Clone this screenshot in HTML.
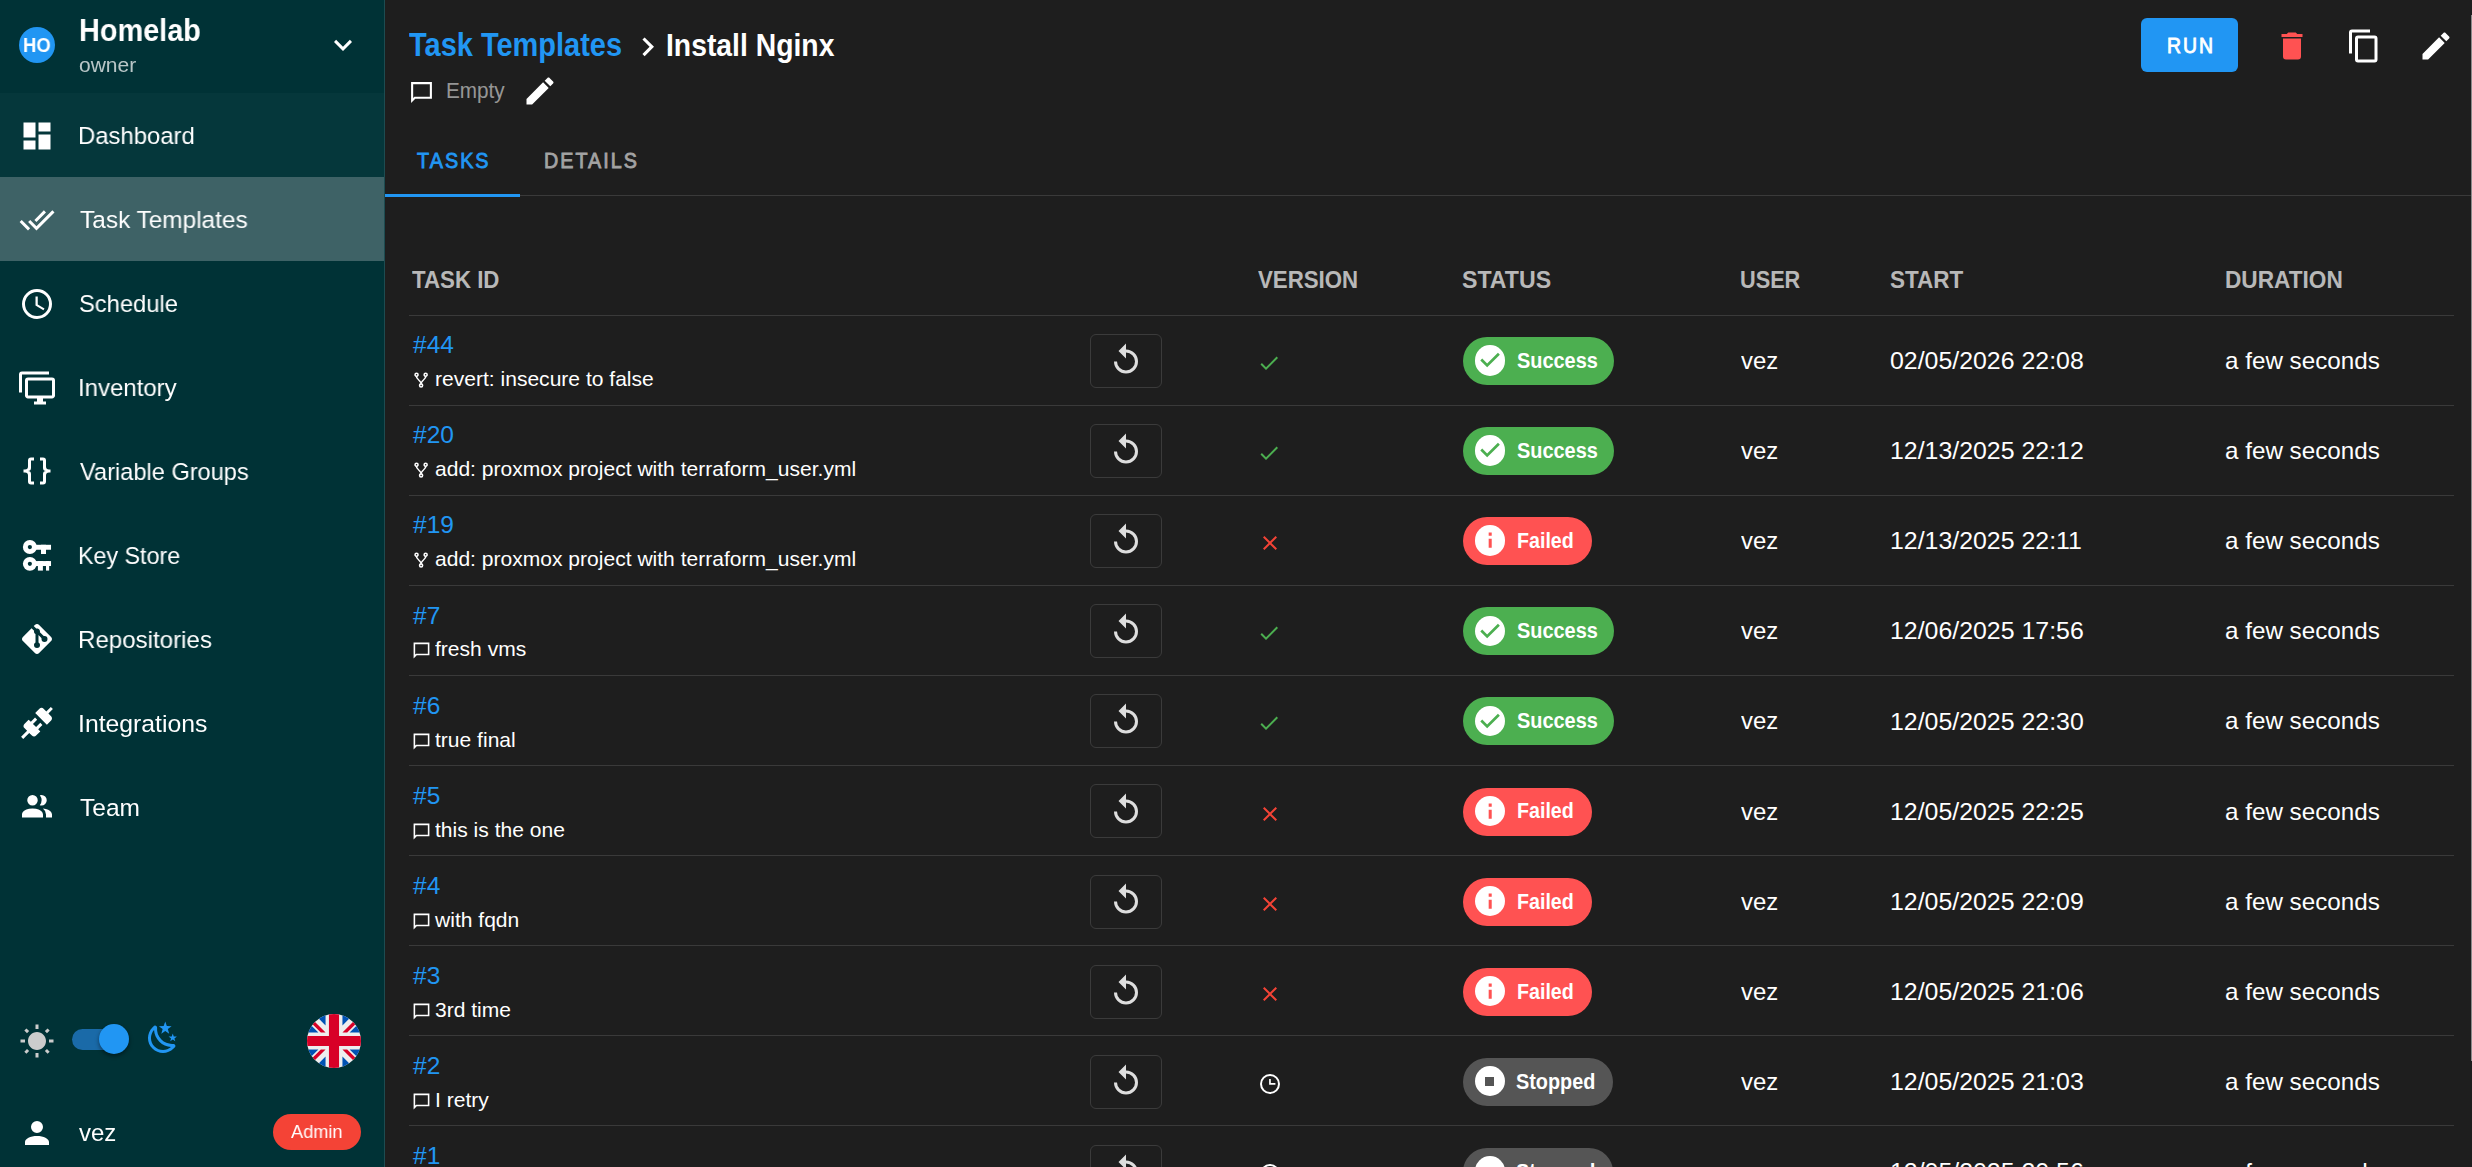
<!DOCTYPE html>
<html><head><meta charset="utf-8"><title>Install Nginx</title>
<style>
html,body{margin:0;padding:0;width:2472px;height:1167px;overflow:hidden;background:#1e1e1e;}
body{position:relative;font-family:"Liberation Sans",sans-serif;}
.t{position:absolute;white-space:nowrap;line-height:1;}
.b{position:absolute;}
.i{position:absolute;display:block;}
</style></head><body>
<div class="b" style="left:0px;top:0px;width:384px;height:1167px;background:#003236;"></div>
<div class="b" style="left:384px;top:0px;width:1px;height:1167px;background:#1d4c51;"></div>
<div class="b" style="left:0px;top:93px;width:384px;height:84px;background:#05373b;"></div>
<div class="b" style="left:0px;top:177px;width:384px;height:84px;background:#3e6266;"></div>
<div class="b" style="left:19px;top:27px;width:36px;height:36px;background:#2196f3;border-radius:50%;"></div>
<div class="t" style="left:23.29px;top:35px;font-size:20.3px;color:#fff;font-weight:bold;transform:scaleX(0.9069);transform-origin:0 0;will-change:transform;">HO</div>
<div class="t" style="left:78.58px;top:15px;font-size:31.8px;color:#fff;font-weight:bold;transform:scaleX(0.9076);transform-origin:0 0;will-change:transform;">Homelab</div>
<div class="t" style="left:79.00px;top:54px;font-size:21px;color:rgba(255,255,255,0.72);transform:scaleX(0.9964);transform-origin:0 0;will-change:transform;">owner</div>
<svg class="i" style="left:325.00px;top:27.30px;width:36px;height:36px;" viewBox="0 0 24 24"><path fill="#fff" fill-rule="evenodd" d="M7.41,8.58L12,13.17L16.59,8.58L18,10L12,16L6,10L7.41,8.58Z"/></svg>
<svg class="i" style="left:19.00px;top:117.90px;width:36px;height:36px;" viewBox="0 0 24 24"><path fill="#fff" fill-rule="evenodd" d="M13,3V9H21V3M13,21H21V11H13M3,21H11V15H3M3,13H11V3H3V13Z"/></svg>
<div class="t" style="left:77.95px;top:124px;font-size:24.5px;color:#fff;transform:scaleX(0.9744);transform-origin:0 0;will-change:transform;">Dashboard</div>
<svg class="i" style="left:19.00px;top:201.79px;width:36px;height:36px;" viewBox="0 0 24 24"><path fill="#fff" fill-rule="evenodd" d="M0.41,13.41L6,19L7.41,17.58L1.83,12M22.24,5.58L11.66,16.17L7.5,12L6.07,13.41L11.66,19L23.66,7M18,7L16.59,5.58L10.24,11.93L11.66,13.34L18,7Z"/></svg>
<div class="t" style="left:79.90px;top:208px;font-size:24.5px;color:#fff;transform:scaleX(0.9958);transform-origin:0 0;will-change:transform;">Task Templates</div>
<svg class="i" style="left:19.00px;top:285.68px;width:36px;height:36px;" viewBox="0 0 24 24"><path fill="#fff" fill-rule="evenodd" d="M12,20A8,8 0 0,0 20,12A8,8 0 0,0 12,4A8,8 0 0,0 4,12A8,8 0 0,0 12,20M12,2A10,10 0 0,1 22,12A10,10 0 0,1 12,22C6.47,22 2,17.5 2,12A10,10 0 0,1 12,2M12.5,7V12.25L17,14.92L16.25,16.15L11,13V7H12.5Z"/></svg>
<div class="t" style="left:78.93px;top:292px;font-size:24.5px;color:#fff;transform:scaleX(0.9690);transform-origin:0 0;will-change:transform;">Schedule</div>
<svg class="i" style="left:19.00px;top:369.57px;width:36px;height:36px;" viewBox="0 0 24 24"><path fill="#fff" fill-rule="evenodd" d="M22,17V7H6V17H22M22,5A2,2 0 0,1 24,7V17C24,18.11 23.1,19 22,19H16V21H18V23H10V21H12V19H6C4.89,19 4,18.11 4,17V7A2,2 0 0,1 6,5H22M2,3V15H0V3A2,2 0 0,1 2,1H20V3H2Z"/></svg>
<div class="t" style="left:77.94px;top:376px;font-size:24.5px;color:#fff;transform:scaleX(0.9788);transform-origin:0 0;will-change:transform;">Inventory</div>
<svg class="i" style="left:19.00px;top:453.46px;width:36px;height:36px;" viewBox="0 0 24 24"><path fill="#fff" fill-rule="evenodd" d="M8,3A2,2 0 0,0 6,5V9A2,2 0 0,1 4,11H3V13H4A2,2 0 0,1 6,15V19A2,2 0 0,0 8,21H10V19H8V14A2,2 0 0,0 6,12A2,2 0 0,0 8,10V5H10V3M16,3A2,2 0 0,1 18,5V9A2,2 0 0,0 20,11H21V13H20A2,2 0 0,0 18,15V19A2,2 0 0,1 16,21H14V19H16V14A2,2 0 0,1 18,12A2,2 0 0,1 16,10V5H14V3H16Z"/></svg>
<div class="t" style="left:79.90px;top:460px;font-size:24.5px;color:#fff;transform:scaleX(0.9629);transform-origin:0 0;will-change:transform;">Variable Groups</div>
<svg class="i" style="left:19px;top:537px;width:36px;height:36px" viewBox="0 0 24 24"><g fill="#fff"><circle cx="7.25" cy="6.7" r="4.65"/><rect x="10.5" y="5.2" width="10.85" height="3.3"/><rect x="14.67" y="5.2" width="3.33" height="6.13"/><circle cx="7.25" cy="17.9" r="4.65"/><rect x="10.5" y="16.05" width="10.85" height="3.3"/><rect x="12.6" y="16.05" width="3.33" height="6.35"/><rect x="18" y="16.05" width="2.1" height="6.35"/></g><circle cx="7.25" cy="6.7" r="1.4" fill="#003236"/><circle cx="7.25" cy="17.9" r="1.4" fill="#003236"/></svg>
<div class="t" style="left:78.00px;top:544px;font-size:24.5px;color:#fff;transform:scaleX(0.9495);transform-origin:0 0;will-change:transform;">Key Store</div>
<svg class="i" style="left:19.00px;top:621.24px;width:36px;height:36px;" viewBox="0 0 24 24"><path fill="#fff" fill-rule="evenodd" d="M2.6,10.59L8.38,4.8L10.07,6.5C9.83,7.35 10.22,8.28 11,8.73V14.27C10.4,14.61 10,15.26 10,16A2,2 0 0,0 12,18A2,2 0 0,0 14,16C14,15.26 13.6,14.61 13,14.27V9.41L15.07,11.5C15,11.65 15,11.82 15,12A2,2 0 0,0 17,14A2,2 0 0,0 19,12A2,2 0 0,0 17,10C16.82,10 16.65,10 16.5,10.07L13.93,7.5C14.19,6.57 13.71,5.55 12.78,5.16C12.35,5 11.9,4.96 11.5,5.07L9.8,3.38L10.59,2.6C11.37,1.81 12.63,1.81 13.41,2.6L21.4,10.59C22.19,11.37 22.19,12.63 21.4,13.41L13.41,21.4C12.63,22.19 11.37,22.19 10.59,21.4L2.6,13.41C1.81,12.63 1.81,11.37 2.6,10.59Z"/></svg>
<div class="t" style="left:77.93px;top:628px;font-size:24.5px;color:#fff;transform:scaleX(0.9836);transform-origin:0 0;will-change:transform;">Repositories</div>
<svg class="i" style="left:19.00px;top:705.13px;width:36px;height:36px;" viewBox="0 0 24 24"><path fill="#fff" fill-rule="evenodd" d="M21.4,7.5C22.2,8.3 22.2,9.6 21.4,10.3L18.6,13.1L10.8,5.3L13.6,2.5C14.4,1.7 15.7,1.7 16.4,2.5L18.2,4.3L21.2,1.3L22.6,2.7L19.6,5.7L21.4,7.5M15.6,13.3L14.2,11.9L11.4,14.7L9.3,12.6L12.1,9.8L10.7,8.4L7.9,11.2L6.4,9.8L3.6,12.6C2.8,13.4 2.8,14.7 3.6,15.4L5.4,17.2L1.4,21.2L2.8,22.6L6.8,18.6L8.6,20.4C9.4,21.2 10.7,21.2 11.4,20.4L14.2,17.6L12.8,16.2L15.6,13.3Z"/></svg>
<div class="t" style="left:77.88px;top:712px;font-size:24.5px;color:#fff;transform:scaleX(1.0104);transform-origin:0 0;will-change:transform;">Integrations</div>
<svg class="i" style="left:19.00px;top:789.02px;width:36px;height:36px;" viewBox="0 0 24 24"><path fill="#fff" fill-rule="evenodd" d="M16,17V19H2V17S2,13 9,13 16,17 16,17M12.5,7.5A3.5,3.5 0 1,0 9,11A3.5,3.5 0 0,0 12.5,7.5M15.94,13A5.32,5.32 0 0,1 18,17V19H22V17S22,13.37 15.94,13M15,4A3.39,3.39 0 0,0 13.87,4.2A5.5,5.5 0 0,1 13.87,10.8A3.39,3.39 0 0,0 15,11A3.5,3.5 0 0,0 18.5,7.5A3.5,3.5 0 0,0 15,4Z"/></svg>
<div class="t" style="left:79.90px;top:796px;font-size:24.5px;color:#fff;transform:scaleX(0.9932);transform-origin:0 0;will-change:transform;">Team</div>
<svg class="i" style="left:19.00px;top:1022.80px;width:36px;height:36px;" viewBox="0 0 24 24"><path fill="#cccccc" fill-rule="evenodd" d="M3.55,19.09L4.96,20.5L6.76,18.71L5.34,17.29M12,6C8.69,6 6,8.69 6,12S8.69,18 12,18 18,15.31 18,12C18,8.68 15.31,6 12,6M20,13H23V11H20M17.24,18.71L19.04,20.5L20.45,19.09L18.66,17.29M20.45,5L19.04,3.6L17.24,5.39L18.66,6.81M13,1H11V4H13M6.76,5.39L4.96,3.6L3.55,5L5.34,6.81L6.76,5.39M1,13H4V11H1M13,20H11V23H13"/></svg>
<div class="b" style="left:72px;top:1029px;width:52px;height:21px;background:#1a6aa8;border-radius:11px;"></div>
<div class="b" style="left:99px;top:1024px;width:30px;height:30px;background:#2196f3;border-radius:50%;box-shadow:0 2px 4px rgba(0,0,0,0.45);"></div>
<svg class="i" style="left:144.50px;top:1020.40px;width:36px;height:36px;" viewBox="0 0 24 24"><path fill="#2196f3" fill-rule="evenodd" d="M17.75,4.09L15.22,6.03L16.13,9.09L13.5,7.28L10.87,9.09L11.78,6.03L9.25,4.09L12.44,4L13.5,1L14.56,4L17.75,4.09M21.25,11L19.61,12.25L20.2,14.23L18.5,13.06L16.8,14.23L17.39,12.25L15.75,11L17.81,10.95L18.5,9L19.19,10.95L21.25,11M18.97,15.95C19.8,15.87 20.69,17.05 20.16,17.8C19.84,18.25 19.5,18.67 19.08,19.07C15.17,23 8.84,23 4.94,19.07C1.03,15.17 1.03,8.83 4.94,4.93C5.34,4.53 5.76,4.17 6.21,3.85C6.96,3.32 8.14,4.21 8.06,5.04C7.79,7.9 8.75,10.87 10.95,13.06C13.14,15.26 16.1,16.22 18.97,15.95M17.33,17.97C14.5,17.81 11.7,16.64 9.53,14.5C7.36,12.31 6.2,9.5 6.04,6.68C3.23,9.82 3.34,14.64 6.35,17.66C9.37,20.67 14.19,20.78 17.33,17.97Z"/></svg>
<svg class="i" style="left:307px;top:1014px;width:54px;height:54px" viewBox="0 0 512 512">
<defs><clipPath id="fc"><circle cx="256" cy="256" r="256"/></clipPath></defs>
<g clip-path="url(#fc)">
<rect x="0" y="0" width="512" height="512" fill="#eee"/>
<path fill="#0052b4" d="M336 0v108L444 0ZM512 68L404 176h108ZM0 176h108L0 68ZM68 0l108 108V0ZM176 512V404L68 512ZM0 444l108-108H0ZM512 336H404l108 108ZM444 512L336 404v108Z"/>
<path fill="#d80027" d="M0 0v45l131 131h45L0 0ZM208 0v208H0v96h208v208h96V304h208v-96H304V0h-96ZM336 176L512 0v45L381 176ZM176 336L0 512v-45L131 336ZM336 336l176 176v-45L381 336h-45Z"/>
</g></svg>
<svg class="i" style="left:19.00px;top:1114.80px;width:36px;height:36px;" viewBox="0 0 24 24"><path fill="#fff" fill-rule="evenodd" d="M12,4A4,4 0 0,1 16,8A4,4 0 0,1 12,12A4,4 0 0,1 8,8A4,4 0 0,1 12,4M12,14C16.42,14 20,15.79 20,18V20H4V18C4,15.79 7.58,14 12,14Z"/></svg>
<div class="t" style="left:79.30px;top:1121px;font-size:24px;color:#fff;transform:scaleX(0.9889);transform-origin:0 0;will-change:transform;">vez</div>
<div class="b" style="left:273px;top:1114px;width:88px;height:36px;background:#f44336;border-radius:18px;"></div>
<div class="t" style="left:291.30px;top:1123px;font-size:18.6px;color:#fff;transform:scaleX(0.9788);transform-origin:0 0;will-change:transform;">Admin</div>
<div class="b" style="left:385px;top:0px;width:2087px;height:1167px;background:#1e1e1e;"></div>
<div class="t" style="left:409.40px;top:29px;font-size:32.5px;color:#2196f3;font-weight:bold;transform:scaleX(0.8912);transform-origin:0 0;">Task Templates</div>
<svg class="i" style="left:629.05px;top:28.45px;width:37.5px;height:37.5px;" viewBox="0 0 24 24"><path fill="#fff" fill-rule="evenodd" d="M8.59,16.58L13.17,12L8.59,7.41L10,6L16,12L10,18L8.59,16.58Z"/></svg>
<div class="t" style="left:666.23px;top:29px;font-size:32px;color:#fff;font-weight:bold;transform:scaleX(0.8851);transform-origin:0 0;">Install Nginx</div>
<svg class="i" style="left:408.50px;top:79.90px;width:25px;height:25px;" viewBox="0 0 24 24"><path fill="#fff" fill-rule="evenodd" d="M2,2H22V18H6L2,22ZM4,4V17.17L5.17,16H20V4Z"/></svg>
<div class="t" style="left:446.27px;top:81px;font-size:21.5px;color:rgba(255,255,255,0.55);transform:scaleX(0.9627);transform-origin:0 0;">Empty</div>
<svg class="i" style="left:521.50px;top:72.50px;width:36px;height:36px;" viewBox="0 0 24 24"><path fill="#fff" fill-rule="evenodd" d="M20.71,7.04C21.1,6.65 21.1,6 20.71,5.63L18.37,3.29C18,2.9 17.35,2.9 16.96,3.29L15.12,5.12L18.87,8.87M3,17.25V21H6.75L17.81,9.93L14.06,6.18L3,17.25Z"/></svg>
<div class="b" style="left:2141px;top:18px;width:97px;height:54px;background:#2196f3;border-radius:6px;"></div>
<div class="t" style="left:2166.78px;top:35px;font-size:21.2px;color:#fff;letter-spacing:2.2px;transform:scaleX(0.9167);transform-origin:0 0;-webkit-text-stroke:0.85px currentColor;">RUN</div>
<svg class="i" style="left:2274.00px;top:27.50px;width:36px;height:36px;" viewBox="0 0 24 24"><path fill="#ff5252" fill-rule="evenodd" d="M19,4H15.5L14.5,3H9.5L8.5,4H5V6H19M6,19A2,2 0 0,0 8,21H16A2,2 0 0,0 18,19V7H6V19Z"/></svg>
<svg class="i" style="left:2345.50px;top:27.50px;width:36px;height:36px;" viewBox="0 0 24 24"><path fill="#fff" fill-rule="evenodd" d="M19,21H8V7H19M19,5H8A2,2 0 0,0 6,7V21A2,2 0 0,0 8,23H19A2,2 0 0,0 21,21V7A2,2 0 0,0 19,5M16,1H4A2,2 0 0,0 2,3V17H4V3H16V1Z"/></svg>
<svg class="i" style="left:2417.50px;top:27.50px;width:36px;height:36px;" viewBox="0 0 24 24"><path fill="#fff" fill-rule="evenodd" d="M20.71,7.04C21.1,6.65 21.1,6 20.71,5.63L18.37,3.29C18,2.9 17.35,2.9 16.96,3.29L15.12,5.12L18.87,8.87M3,17.25V21H6.75L17.81,9.93L14.06,6.18L3,17.25Z"/></svg>
<div class="t" style="left:416.80px;top:150px;font-size:21.2px;color:#2196f3;letter-spacing:2.2px;transform:scaleX(0.9329);transform-origin:0 0;-webkit-text-stroke:0.85px currentColor;">TASKS</div>
<div class="t" style="left:543.57px;top:150px;font-size:21.2px;color:#a3a3a3;letter-spacing:2.2px;transform:scaleX(0.9303);transform-origin:0 0;-webkit-text-stroke:0.85px currentColor;">DETAILS</div>
<div class="b" style="left:385px;top:195px;width:2087px;height:1px;background:#3a3a3a;"></div>
<div class="b" style="left:385px;top:194px;width:135px;height:3px;background:#2196f3;"></div>
<div class="b" style="left:2471px;top:15px;width:1px;height:1046px;background:#8a8a8a;"></div>
<div class="t" style="left:412.40px;top:268px;font-size:24.8px;color:rgba(255,255,255,0.7);font-weight:bold;transform:scaleX(0.8979);transform-origin:0 0;">TASK ID</div>
<div class="t" style="left:1257.50px;top:268px;font-size:24.8px;color:rgba(255,255,255,0.7);font-weight:bold;transform:scaleX(0.8973);transform-origin:0 0;">VERSION</div>
<div class="t" style="left:1462.37px;top:268px;font-size:24.8px;color:rgba(255,255,255,0.7);font-weight:bold;transform:scaleX(0.9330);transform-origin:0 0;">STATUS</div>
<div class="t" style="left:1739.83px;top:268px;font-size:24.8px;color:rgba(255,255,255,0.7);font-weight:bold;transform:scaleX(0.8746);transform-origin:0 0;">USER</div>
<div class="t" style="left:1889.79px;top:268px;font-size:24.8px;color:rgba(255,255,255,0.7);font-weight:bold;transform:scaleX(0.9062);transform-origin:0 0;">START</div>
<div class="t" style="left:2225.49px;top:268px;font-size:24.8px;color:rgba(255,255,255,0.7);font-weight:bold;transform:scaleX(0.9126);transform-origin:0 0;">DURATION</div>
<div class="b" style="left:409px;top:315px;width:2045px;height:1px;background:#3a3a3a;"></div>
<div class="t" style="left:413.00px;top:333px;font-size:24.5px;color:#2196f3;">#44</div>
<svg class="i" style="left:411.90px;top:371.10px;width:18.2px;height:18.2px;" viewBox="0 0 24 24"><path fill="#fff" fill-rule="evenodd" d="M6,2A3,3 0 0,1 9,5C9,6.28 8.19,7.38 7.06,7.81C7.15,8.27 7.39,8.83 8,9.63C9,10.92 11,12.83 12,14.17C13,12.83 15,10.92 16,9.63C16.61,8.83 16.85,8.27 16.94,7.81C15.81,7.38 15,6.28 15,5A3,3 0 0,1 18,2A3,3 0 0,1 21,5C21,6.32 20.14,7.45 18.95,7.85C18.87,8.37 18.64,9 18,9.83C17,11.17 15,13.08 14,14.38C13.39,15.17 13.15,15.73 13.06,16.19C14.19,16.62 15,17.72 15,19A3,3 0 0,1 12,22A3,3 0 0,1 9,19C9,17.72 9.81,16.62 10.94,16.19C10.85,15.73 10.61,15.17 10,14.38C9,13.08 7,11.17 6,9.83C5.36,9 5.13,8.37 5.05,7.85C3.86,7.45 3,6.32 3,5A3,3 0 0,1 6,2M6,4A1,1 0 0,0 5,5A1,1 0 0,0 6,6A1,1 0 0,0 7,5A1,1 0 0,0 6,4M18,4A1,1 0 0,0 17,5A1,1 0 0,0 18,6A1,1 0 0,0 19,5A1,1 0 0,0 18,4M12,18A1,1 0 0,0 11,19A1,1 0 0,0 12,20A1,1 0 0,0 13,19A1,1 0 0,0 12,18Z"/></svg>
<div class="t" style="left:434.70px;top:368px;font-size:21px;color:#fff;transform:scaleX(1.0023);transform-origin:0 0;">revert: insecure to false</div>
<div class="b" style="left:1090px;top:334px;width:72px;height:54px;box-sizing:border-box;border:1px solid #3b3b3b;border-radius:6px;"></div>
<svg class="i" style="left:1108.00px;top:341.80px;width:36px;height:36px;" viewBox="0 0 24 24"><path fill="#dedede" fill-rule="evenodd" d="M12,5V1L7,6L12,11V7A6,6 0 0,1 18,13A6,6 0 0,1 12,19A6,6 0 0,1 6,13H4A8,8 0 0,0 12,21A8,8 0 0,0 20,13A8,8 0 0,0 12,5Z"/></svg>
<svg class="i" style="left:1256.80px;top:350.90px;width:24px;height:24px;" viewBox="0 0 24 24"><path fill="#4caf50" fill-rule="evenodd" d="M21,7L9,19L3.5,13.5L4.91,12.09L9,16.17L19.59,5.59L21,7Z"/></svg>
<div class="b" style="left:1463px;top:337px;width:151px;height:48px;background:#4caf50;border-radius:24px;"></div>
<div class="b" style="left:1474.7px;top:345.2px;width:30.4px;height:30.4px;background:#fff;border-radius:50%;"></div>
<svg class="i" style="left:1474.7px;top:345.20px;width:30.4px;height:30.4px" viewBox="0 0 20 20"><path fill="#4caf50" d="M8,14.7L3.5,10.2L4.75,8.95L8,12.2L15.1,5.1L16.35,6.35L8,14.7Z"/></svg>
<div class="t" style="left:1516.58px;top:350px;font-size:21.7px;color:#fff;font-weight:bold;transform:scaleX(0.9186);transform-origin:0 0;">Success</div>
<div class="t" style="left:1740.70px;top:349px;font-size:24px;color:#fff;transform:scaleX(0.9972);transform-origin:0 0;">vez</div>
<div class="t" style="left:1889.68px;top:349px;font-size:24.4px;color:#fff;transform:scaleX(1.0202);transform-origin:0 0;">02/05/2026 22:08</div>
<div class="t" style="left:2225.39px;top:349px;font-size:24px;color:#fff;transform:scaleX(1.0092);transform-origin:0 0;">a few seconds</div>
<div class="b" style="left:409px;top:405px;width:2045px;height:1px;background:#3a3a3a;"></div>
<div class="t" style="left:413.00px;top:423px;font-size:24.5px;color:#2196f3;">#20</div>
<svg class="i" style="left:411.90px;top:461.20px;width:18.2px;height:18.2px;" viewBox="0 0 24 24"><path fill="#fff" fill-rule="evenodd" d="M6,2A3,3 0 0,1 9,5C9,6.28 8.19,7.38 7.06,7.81C7.15,8.27 7.39,8.83 8,9.63C9,10.92 11,12.83 12,14.17C13,12.83 15,10.92 16,9.63C16.61,8.83 16.85,8.27 16.94,7.81C15.81,7.38 15,6.28 15,5A3,3 0 0,1 18,2A3,3 0 0,1 21,5C21,6.32 20.14,7.45 18.95,7.85C18.87,8.37 18.64,9 18,9.83C17,11.17 15,13.08 14,14.38C13.39,15.17 13.15,15.73 13.06,16.19C14.19,16.62 15,17.72 15,19A3,3 0 0,1 12,22A3,3 0 0,1 9,19C9,17.72 9.81,16.62 10.94,16.19C10.85,15.73 10.61,15.17 10,14.38C9,13.08 7,11.17 6,9.83C5.36,9 5.13,8.37 5.05,7.85C3.86,7.45 3,6.32 3,5A3,3 0 0,1 6,2M6,4A1,1 0 0,0 5,5A1,1 0 0,0 6,6A1,1 0 0,0 7,5A1,1 0 0,0 6,4M18,4A1,1 0 0,0 17,5A1,1 0 0,0 18,6A1,1 0 0,0 19,5A1,1 0 0,0 18,4M12,18A1,1 0 0,0 11,19A1,1 0 0,0 12,20A1,1 0 0,0 13,19A1,1 0 0,0 12,18Z"/></svg>
<div class="t" style="left:434.70px;top:458px;font-size:21px;color:#fff;transform:scaleX(1.0023);transform-origin:0 0;">add: proxmox project with terraform_user.yml</div>
<div class="b" style="left:1090px;top:424px;width:72px;height:54px;box-sizing:border-box;border:1px solid #3b3b3b;border-radius:6px;"></div>
<svg class="i" style="left:1108.00px;top:431.90px;width:36px;height:36px;" viewBox="0 0 24 24"><path fill="#dedede" fill-rule="evenodd" d="M12,5V1L7,6L12,11V7A6,6 0 0,1 18,13A6,6 0 0,1 12,19A6,6 0 0,1 6,13H4A8,8 0 0,0 12,21A8,8 0 0,0 20,13A8,8 0 0,0 12,5Z"/></svg>
<svg class="i" style="left:1256.80px;top:441.00px;width:24px;height:24px;" viewBox="0 0 24 24"><path fill="#4caf50" fill-rule="evenodd" d="M21,7L9,19L3.5,13.5L4.91,12.09L9,16.17L19.59,5.59L21,7Z"/></svg>
<div class="b" style="left:1463px;top:427px;width:151px;height:48px;background:#4caf50;border-radius:24px;"></div>
<div class="b" style="left:1474.7px;top:435.3px;width:30.4px;height:30.4px;background:#fff;border-radius:50%;"></div>
<svg class="i" style="left:1474.7px;top:435.30px;width:30.4px;height:30.4px" viewBox="0 0 20 20"><path fill="#4caf50" d="M8,14.7L3.5,10.2L4.75,8.95L8,12.2L15.1,5.1L16.35,6.35L8,14.7Z"/></svg>
<div class="t" style="left:1516.58px;top:440px;font-size:21.7px;color:#fff;font-weight:bold;transform:scaleX(0.9186);transform-origin:0 0;">Success</div>
<div class="t" style="left:1740.70px;top:439px;font-size:24px;color:#fff;transform:scaleX(0.9972);transform-origin:0 0;">vez</div>
<div class="t" style="left:1889.68px;top:439px;font-size:24.4px;color:#fff;transform:scaleX(1.0202);transform-origin:0 0;">12/13/2025 22:12</div>
<div class="t" style="left:2225.39px;top:439px;font-size:24px;color:#fff;transform:scaleX(1.0092);transform-origin:0 0;">a few seconds</div>
<div class="b" style="left:409px;top:495px;width:2045px;height:1px;background:#3a3a3a;"></div>
<div class="t" style="left:413.00px;top:513px;font-size:24.5px;color:#2196f3;">#19</div>
<svg class="i" style="left:411.90px;top:551.30px;width:18.2px;height:18.2px;" viewBox="0 0 24 24"><path fill="#fff" fill-rule="evenodd" d="M6,2A3,3 0 0,1 9,5C9,6.28 8.19,7.38 7.06,7.81C7.15,8.27 7.39,8.83 8,9.63C9,10.92 11,12.83 12,14.17C13,12.83 15,10.92 16,9.63C16.61,8.83 16.85,8.27 16.94,7.81C15.81,7.38 15,6.28 15,5A3,3 0 0,1 18,2A3,3 0 0,1 21,5C21,6.32 20.14,7.45 18.95,7.85C18.87,8.37 18.64,9 18,9.83C17,11.17 15,13.08 14,14.38C13.39,15.17 13.15,15.73 13.06,16.19C14.19,16.62 15,17.72 15,19A3,3 0 0,1 12,22A3,3 0 0,1 9,19C9,17.72 9.81,16.62 10.94,16.19C10.85,15.73 10.61,15.17 10,14.38C9,13.08 7,11.17 6,9.83C5.36,9 5.13,8.37 5.05,7.85C3.86,7.45 3,6.32 3,5A3,3 0 0,1 6,2M6,4A1,1 0 0,0 5,5A1,1 0 0,0 6,6A1,1 0 0,0 7,5A1,1 0 0,0 6,4M18,4A1,1 0 0,0 17,5A1,1 0 0,0 18,6A1,1 0 0,0 19,5A1,1 0 0,0 18,4M12,18A1,1 0 0,0 11,19A1,1 0 0,0 12,20A1,1 0 0,0 13,19A1,1 0 0,0 12,18Z"/></svg>
<div class="t" style="left:434.70px;top:548px;font-size:21px;color:#fff;transform:scaleX(1.0023);transform-origin:0 0;">add: proxmox project with terraform_user.yml</div>
<div class="b" style="left:1090px;top:514px;width:72px;height:54px;box-sizing:border-box;border:1px solid #3b3b3b;border-radius:6px;"></div>
<svg class="i" style="left:1108.00px;top:522.00px;width:36px;height:36px;" viewBox="0 0 24 24"><path fill="#dedede" fill-rule="evenodd" d="M12,5V1L7,6L12,11V7A6,6 0 0,1 18,13A6,6 0 0,1 12,19A6,6 0 0,1 6,13H4A8,8 0 0,0 12,21A8,8 0 0,0 20,13A8,8 0 0,0 12,5Z"/></svg>
<svg class="i" style="left:1257.50px;top:531.20px;width:24px;height:24px;" viewBox="0 0 24 24"><path fill="#f44336" fill-rule="evenodd" d="M19,6.41L17.59,5L12,10.59L6.41,5L5,6.41L10.59,12L5,17.59L6.41,19L12,13.41L17.59,19L19,17.59L13.41,12L19,6.41Z"/></svg>
<div class="b" style="left:1463px;top:517px;width:129px;height:48px;background:#ff5252;border-radius:24px;"></div>
<div class="b" style="left:1474.7px;top:525.4000000000001px;width:30.4px;height:30.4px;background:#fff;border-radius:50%;"></div>
<svg class="i" style="left:1474.7px;top:525.40px;width:30.4px;height:30.4px" viewBox="0 0 20 20"><path fill="#ff5252" d="M11,7H9V5H11M11,15H9V9H11Z"/></svg>
<div class="t" style="left:1516.79px;top:530px;font-size:21.7px;color:#fff;font-weight:bold;transform:scaleX(0.9066);transform-origin:0 0;">Failed</div>
<div class="t" style="left:1740.70px;top:529px;font-size:24px;color:#fff;transform:scaleX(0.9972);transform-origin:0 0;">vez</div>
<div class="t" style="left:1889.68px;top:529px;font-size:24.4px;color:#fff;transform:scaleX(1.0202);transform-origin:0 0;">12/13/2025 22:11</div>
<div class="t" style="left:2225.39px;top:529px;font-size:24px;color:#fff;transform:scaleX(1.0092);transform-origin:0 0;">a few seconds</div>
<div class="b" style="left:409px;top:585px;width:2045px;height:1px;background:#3a3a3a;"></div>
<div class="t" style="left:413.00px;top:604px;font-size:24.5px;color:#2196f3;">#7</div>
<svg class="i" style="left:411.60px;top:641.40px;width:19px;height:19px;" viewBox="0 0 24 24"><path fill="#fff" fill-rule="evenodd" d="M2,2H22V18H6L2,22ZM4,4V17.17L5.17,16H20V4Z"/></svg>
<div class="t" style="left:434.70px;top:638px;font-size:21px;color:#fff;transform:scaleX(1.0023);transform-origin:0 0;">fresh vms</div>
<div class="b" style="left:1090px;top:604px;width:72px;height:54px;box-sizing:border-box;border:1px solid #3b3b3b;border-radius:6px;"></div>
<svg class="i" style="left:1108.00px;top:612.10px;width:36px;height:36px;" viewBox="0 0 24 24"><path fill="#dedede" fill-rule="evenodd" d="M12,5V1L7,6L12,11V7A6,6 0 0,1 18,13A6,6 0 0,1 12,19A6,6 0 0,1 6,13H4A8,8 0 0,0 12,21A8,8 0 0,0 20,13A8,8 0 0,0 12,5Z"/></svg>
<svg class="i" style="left:1256.80px;top:621.20px;width:24px;height:24px;" viewBox="0 0 24 24"><path fill="#4caf50" fill-rule="evenodd" d="M21,7L9,19L3.5,13.5L4.91,12.09L9,16.17L19.59,5.59L21,7Z"/></svg>
<div class="b" style="left:1463px;top:607px;width:151px;height:48px;background:#4caf50;border-radius:24px;"></div>
<div class="b" style="left:1474.7px;top:615.5px;width:30.4px;height:30.4px;background:#fff;border-radius:50%;"></div>
<svg class="i" style="left:1474.7px;top:615.50px;width:30.4px;height:30.4px" viewBox="0 0 20 20"><path fill="#4caf50" d="M8,14.7L3.5,10.2L4.75,8.95L8,12.2L15.1,5.1L16.35,6.35L8,14.7Z"/></svg>
<div class="t" style="left:1516.58px;top:620px;font-size:21.7px;color:#fff;font-weight:bold;transform:scaleX(0.9186);transform-origin:0 0;">Success</div>
<div class="t" style="left:1740.70px;top:619px;font-size:24px;color:#fff;transform:scaleX(0.9972);transform-origin:0 0;">vez</div>
<div class="t" style="left:1889.68px;top:619px;font-size:24.4px;color:#fff;transform:scaleX(1.0202);transform-origin:0 0;">12/06/2025 17:56</div>
<div class="t" style="left:2225.39px;top:619px;font-size:24px;color:#fff;transform:scaleX(1.0092);transform-origin:0 0;">a few seconds</div>
<div class="b" style="left:409px;top:675px;width:2045px;height:1px;background:#3a3a3a;"></div>
<div class="t" style="left:413.00px;top:694px;font-size:24.5px;color:#2196f3;">#6</div>
<svg class="i" style="left:411.60px;top:731.50px;width:19px;height:19px;" viewBox="0 0 24 24"><path fill="#fff" fill-rule="evenodd" d="M2,2H22V18H6L2,22ZM4,4V17.17L5.17,16H20V4Z"/></svg>
<div class="t" style="left:434.70px;top:729px;font-size:21px;color:#fff;transform:scaleX(1.0023);transform-origin:0 0;">true final</div>
<div class="b" style="left:1090px;top:694px;width:72px;height:54px;box-sizing:border-box;border:1px solid #3b3b3b;border-radius:6px;"></div>
<svg class="i" style="left:1108.00px;top:702.20px;width:36px;height:36px;" viewBox="0 0 24 24"><path fill="#dedede" fill-rule="evenodd" d="M12,5V1L7,6L12,11V7A6,6 0 0,1 18,13A6,6 0 0,1 12,19A6,6 0 0,1 6,13H4A8,8 0 0,0 12,21A8,8 0 0,0 20,13A8,8 0 0,0 12,5Z"/></svg>
<svg class="i" style="left:1256.80px;top:711.30px;width:24px;height:24px;" viewBox="0 0 24 24"><path fill="#4caf50" fill-rule="evenodd" d="M21,7L9,19L3.5,13.5L4.91,12.09L9,16.17L19.59,5.59L21,7Z"/></svg>
<div class="b" style="left:1463px;top:697px;width:151px;height:48px;background:#4caf50;border-radius:24px;"></div>
<div class="b" style="left:1474.7px;top:705.6px;width:30.4px;height:30.4px;background:#fff;border-radius:50%;"></div>
<svg class="i" style="left:1474.7px;top:705.60px;width:30.4px;height:30.4px" viewBox="0 0 20 20"><path fill="#4caf50" d="M8,14.7L3.5,10.2L4.75,8.95L8,12.2L15.1,5.1L16.35,6.35L8,14.7Z"/></svg>
<div class="t" style="left:1516.58px;top:710px;font-size:21.7px;color:#fff;font-weight:bold;transform:scaleX(0.9186);transform-origin:0 0;">Success</div>
<div class="t" style="left:1740.70px;top:709px;font-size:24px;color:#fff;transform:scaleX(0.9972);transform-origin:0 0;">vez</div>
<div class="t" style="left:1889.68px;top:710px;font-size:24.4px;color:#fff;transform:scaleX(1.0202);transform-origin:0 0;">12/05/2025 22:30</div>
<div class="t" style="left:2225.39px;top:709px;font-size:24px;color:#fff;transform:scaleX(1.0092);transform-origin:0 0;">a few seconds</div>
<div class="b" style="left:409px;top:765px;width:2045px;height:1px;background:#3a3a3a;"></div>
<div class="t" style="left:413.00px;top:784px;font-size:24.5px;color:#2196f3;">#5</div>
<svg class="i" style="left:411.60px;top:821.60px;width:19px;height:19px;" viewBox="0 0 24 24"><path fill="#fff" fill-rule="evenodd" d="M2,2H22V18H6L2,22ZM4,4V17.17L5.17,16H20V4Z"/></svg>
<div class="t" style="left:434.70px;top:819px;font-size:21px;color:#fff;transform:scaleX(1.0023);transform-origin:0 0;">this is the one</div>
<div class="b" style="left:1090px;top:784px;width:72px;height:54px;box-sizing:border-box;border:1px solid #3b3b3b;border-radius:6px;"></div>
<svg class="i" style="left:1108.00px;top:792.30px;width:36px;height:36px;" viewBox="0 0 24 24"><path fill="#dedede" fill-rule="evenodd" d="M12,5V1L7,6L12,11V7A6,6 0 0,1 18,13A6,6 0 0,1 12,19A6,6 0 0,1 6,13H4A8,8 0 0,0 12,21A8,8 0 0,0 20,13A8,8 0 0,0 12,5Z"/></svg>
<svg class="i" style="left:1257.50px;top:801.50px;width:24px;height:24px;" viewBox="0 0 24 24"><path fill="#f44336" fill-rule="evenodd" d="M19,6.41L17.59,5L12,10.59L6.41,5L5,6.41L10.59,12L5,17.59L6.41,19L12,13.41L17.59,19L19,17.59L13.41,12L19,6.41Z"/></svg>
<div class="b" style="left:1463px;top:788px;width:129px;height:48px;background:#ff5252;border-radius:24px;"></div>
<div class="b" style="left:1474.7px;top:795.7px;width:30.4px;height:30.4px;background:#fff;border-radius:50%;"></div>
<svg class="i" style="left:1474.7px;top:795.70px;width:30.4px;height:30.4px" viewBox="0 0 20 20"><path fill="#ff5252" d="M11,7H9V5H11M11,15H9V9H11Z"/></svg>
<div class="t" style="left:1516.79px;top:800px;font-size:21.7px;color:#fff;font-weight:bold;transform:scaleX(0.9066);transform-origin:0 0;">Failed</div>
<div class="t" style="left:1740.70px;top:800px;font-size:24px;color:#fff;transform:scaleX(0.9972);transform-origin:0 0;">vez</div>
<div class="t" style="left:1889.68px;top:800px;font-size:24.4px;color:#fff;transform:scaleX(1.0202);transform-origin:0 0;">12/05/2025 22:25</div>
<div class="t" style="left:2225.39px;top:800px;font-size:24px;color:#fff;transform:scaleX(1.0092);transform-origin:0 0;">a few seconds</div>
<div class="b" style="left:409px;top:855px;width:2045px;height:1px;background:#3a3a3a;"></div>
<div class="t" style="left:413.00px;top:874px;font-size:24.5px;color:#2196f3;">#4</div>
<svg class="i" style="left:411.60px;top:911.70px;width:19px;height:19px;" viewBox="0 0 24 24"><path fill="#fff" fill-rule="evenodd" d="M2,2H22V18H6L2,22ZM4,4V17.17L5.17,16H20V4Z"/></svg>
<div class="t" style="left:434.70px;top:909px;font-size:21px;color:#fff;transform:scaleX(1.0023);transform-origin:0 0;">with fqdn</div>
<div class="b" style="left:1090px;top:875px;width:72px;height:54px;box-sizing:border-box;border:1px solid #3b3b3b;border-radius:6px;"></div>
<svg class="i" style="left:1108.00px;top:882.40px;width:36px;height:36px;" viewBox="0 0 24 24"><path fill="#dedede" fill-rule="evenodd" d="M12,5V1L7,6L12,11V7A6,6 0 0,1 18,13A6,6 0 0,1 12,19A6,6 0 0,1 6,13H4A8,8 0 0,0 12,21A8,8 0 0,0 20,13A8,8 0 0,0 12,5Z"/></svg>
<svg class="i" style="left:1257.50px;top:891.60px;width:24px;height:24px;" viewBox="0 0 24 24"><path fill="#f44336" fill-rule="evenodd" d="M19,6.41L17.59,5L12,10.59L6.41,5L5,6.41L10.59,12L5,17.59L6.41,19L12,13.41L17.59,19L19,17.59L13.41,12L19,6.41Z"/></svg>
<div class="b" style="left:1463px;top:878px;width:129px;height:48px;background:#ff5252;border-radius:24px;"></div>
<div class="b" style="left:1474.7px;top:885.8px;width:30.4px;height:30.4px;background:#fff;border-radius:50%;"></div>
<svg class="i" style="left:1474.7px;top:885.80px;width:30.4px;height:30.4px" viewBox="0 0 20 20"><path fill="#ff5252" d="M11,7H9V5H11M11,15H9V9H11Z"/></svg>
<div class="t" style="left:1516.79px;top:891px;font-size:21.7px;color:#fff;font-weight:bold;transform:scaleX(0.9066);transform-origin:0 0;">Failed</div>
<div class="t" style="left:1740.70px;top:890px;font-size:24px;color:#fff;transform:scaleX(0.9972);transform-origin:0 0;">vez</div>
<div class="t" style="left:1889.68px;top:890px;font-size:24.4px;color:#fff;transform:scaleX(1.0202);transform-origin:0 0;">12/05/2025 22:09</div>
<div class="t" style="left:2225.39px;top:890px;font-size:24px;color:#fff;transform:scaleX(1.0092);transform-origin:0 0;">a few seconds</div>
<div class="b" style="left:409px;top:945px;width:2045px;height:1px;background:#3a3a3a;"></div>
<div class="t" style="left:413.00px;top:964px;font-size:24.5px;color:#2196f3;">#3</div>
<svg class="i" style="left:411.60px;top:1001.80px;width:19px;height:19px;" viewBox="0 0 24 24"><path fill="#fff" fill-rule="evenodd" d="M2,2H22V18H6L2,22ZM4,4V17.17L5.17,16H20V4Z"/></svg>
<div class="t" style="left:434.70px;top:999px;font-size:21px;color:#fff;transform:scaleX(1.0023);transform-origin:0 0;">3rd time</div>
<div class="b" style="left:1090px;top:965px;width:72px;height:54px;box-sizing:border-box;border:1px solid #3b3b3b;border-radius:6px;"></div>
<svg class="i" style="left:1108.00px;top:972.50px;width:36px;height:36px;" viewBox="0 0 24 24"><path fill="#dedede" fill-rule="evenodd" d="M12,5V1L7,6L12,11V7A6,6 0 0,1 18,13A6,6 0 0,1 12,19A6,6 0 0,1 6,13H4A8,8 0 0,0 12,21A8,8 0 0,0 20,13A8,8 0 0,0 12,5Z"/></svg>
<svg class="i" style="left:1257.50px;top:981.70px;width:24px;height:24px;" viewBox="0 0 24 24"><path fill="#f44336" fill-rule="evenodd" d="M19,6.41L17.59,5L12,10.59L6.41,5L5,6.41L10.59,12L5,17.59L6.41,19L12,13.41L17.59,19L19,17.59L13.41,12L19,6.41Z"/></svg>
<div class="b" style="left:1463px;top:968px;width:129px;height:48px;background:#ff5252;border-radius:24px;"></div>
<div class="b" style="left:1474.7px;top:975.9px;width:30.4px;height:30.4px;background:#fff;border-radius:50%;"></div>
<svg class="i" style="left:1474.7px;top:975.90px;width:30.4px;height:30.4px" viewBox="0 0 20 20"><path fill="#ff5252" d="M11,7H9V5H11M11,15H9V9H11Z"/></svg>
<div class="t" style="left:1516.79px;top:981px;font-size:21.7px;color:#fff;font-weight:bold;transform:scaleX(0.9066);transform-origin:0 0;">Failed</div>
<div class="t" style="left:1740.70px;top:980px;font-size:24px;color:#fff;transform:scaleX(0.9972);transform-origin:0 0;">vez</div>
<div class="t" style="left:1889.68px;top:980px;font-size:24.4px;color:#fff;transform:scaleX(1.0202);transform-origin:0 0;">12/05/2025 21:06</div>
<div class="t" style="left:2225.39px;top:980px;font-size:24px;color:#fff;transform:scaleX(1.0092);transform-origin:0 0;">a few seconds</div>
<div class="b" style="left:409px;top:1035px;width:2045px;height:1px;background:#3a3a3a;"></div>
<div class="t" style="left:413.00px;top:1054px;font-size:24.5px;color:#2196f3;">#2</div>
<svg class="i" style="left:411.60px;top:1091.90px;width:19px;height:19px;" viewBox="0 0 24 24"><path fill="#fff" fill-rule="evenodd" d="M2,2H22V18H6L2,22ZM4,4V17.17L5.17,16H20V4Z"/></svg>
<div class="t" style="left:434.70px;top:1089px;font-size:21px;color:#fff;transform:scaleX(1.0023);transform-origin:0 0;">I retry</div>
<div class="b" style="left:1090px;top:1055px;width:72px;height:54px;box-sizing:border-box;border:1px solid #3b3b3b;border-radius:6px;"></div>
<svg class="i" style="left:1108.00px;top:1062.60px;width:36px;height:36px;" viewBox="0 0 24 24"><path fill="#dedede" fill-rule="evenodd" d="M12,5V1L7,6L12,11V7A6,6 0 0,1 18,13A6,6 0 0,1 12,19A6,6 0 0,1 6,13H4A8,8 0 0,0 12,21A8,8 0 0,0 20,13A8,8 0 0,0 12,5Z"/></svg>
<svg class="i" style="left:1257.60px;top:1071.70px;width:24px;height:24px;" viewBox="0 0 24 24"><path fill="#fff" fill-rule="evenodd" d="M12,20A8,8 0 0,0 20,12A8,8 0 0,0 12,4A8,8 0 0,0 4,12A8,8 0 0,0 12,20M12,2A10,10 0 0,1 22,12A10,10 0 0,1 12,22A10,10 0 0,1 2,12A10,10 0 0,1 12,2M11.1,7H12.8V11.1H17.4V12.7H11.1Z"/></svg>
<div class="b" style="left:1463px;top:1058px;width:150px;height:48px;background:#555555;border-radius:24px;"></div>
<div class="b" style="left:1474.7px;top:1066.0px;width:30.4px;height:30.4px;background:#fff;border-radius:50%;"></div>
<div class="b" style="left:1485.4px;top:1076.7px;width:9px;height:9px;background:#555555;"></div>
<div class="t" style="left:1516.28px;top:1071px;font-size:21.7px;color:#fff;font-weight:bold;transform:scaleX(0.9153);transform-origin:0 0;">Stopped</div>
<div class="t" style="left:1740.70px;top:1070px;font-size:24px;color:#fff;transform:scaleX(0.9972);transform-origin:0 0;">vez</div>
<div class="t" style="left:1889.68px;top:1070px;font-size:24.4px;color:#fff;transform:scaleX(1.0202);transform-origin:0 0;">12/05/2025 21:03</div>
<div class="t" style="left:2225.39px;top:1070px;font-size:24px;color:#fff;transform:scaleX(1.0092);transform-origin:0 0;">a few seconds</div>
<div class="b" style="left:409px;top:1125px;width:2045px;height:1px;background:#3a3a3a;"></div>
<div class="t" style="left:413.00px;top:1144px;font-size:24.5px;color:#2196f3;">#1</div>
<svg class="i" style="left:411.60px;top:1182.00px;width:19px;height:19px;" viewBox="0 0 24 24"><path fill="#fff" fill-rule="evenodd" d="M2,2H22V18H6L2,22ZM4,4V17.17L5.17,16H20V4Z"/></svg>
<div class="t" style="left:434.70px;top:1179px;font-size:21px;color:#fff;transform:scaleX(1.0023);transform-origin:0 0;">first run</div>
<div class="b" style="left:1090px;top:1145px;width:72px;height:54px;box-sizing:border-box;border:1px solid #3b3b3b;border-radius:6px;"></div>
<svg class="i" style="left:1108.00px;top:1152.70px;width:36px;height:36px;" viewBox="0 0 24 24"><path fill="#dedede" fill-rule="evenodd" d="M12,5V1L7,6L12,11V7A6,6 0 0,1 18,13A6,6 0 0,1 12,19A6,6 0 0,1 6,13H4A8,8 0 0,0 12,21A8,8 0 0,0 20,13A8,8 0 0,0 12,5Z"/></svg>
<svg class="i" style="left:1257.60px;top:1161.80px;width:24px;height:24px;" viewBox="0 0 24 24"><path fill="#fff" fill-rule="evenodd" d="M12,20A8,8 0 0,0 20,12A8,8 0 0,0 12,4A8,8 0 0,0 4,12A8,8 0 0,0 12,20M12,2A10,10 0 0,1 22,12A10,10 0 0,1 12,22A10,10 0 0,1 2,12A10,10 0 0,1 12,2M11.1,7H12.8V11.1H17.4V12.7H11.1Z"/></svg>
<div class="b" style="left:1463px;top:1148px;width:150px;height:48px;background:#555555;border-radius:24px;"></div>
<div class="b" style="left:1474.7px;top:1156.1000000000001px;width:30.4px;height:30.4px;background:#fff;border-radius:50%;"></div>
<div class="b" style="left:1485.4px;top:1166.8000000000002px;width:9px;height:9px;background:#555555;"></div>
<div class="t" style="left:1516.28px;top:1161px;font-size:21.7px;color:#fff;font-weight:bold;transform:scaleX(0.9153);transform-origin:0 0;">Stopped</div>
<div class="t" style="left:1740.70px;top:1160px;font-size:24px;color:#fff;transform:scaleX(0.9972);transform-origin:0 0;">vez</div>
<div class="t" style="left:1889.68px;top:1160px;font-size:24.4px;color:#fff;transform:scaleX(1.0202);transform-origin:0 0;">12/05/2025 20:56</div>
<div class="t" style="left:2225.39px;top:1160px;font-size:24px;color:#fff;transform:scaleX(1.0092);transform-origin:0 0;">a few seconds</div>
<div class="b" style="left:409px;top:1215px;width:2045px;height:1px;background:#3a3a3a;"></div>
</body></html>
